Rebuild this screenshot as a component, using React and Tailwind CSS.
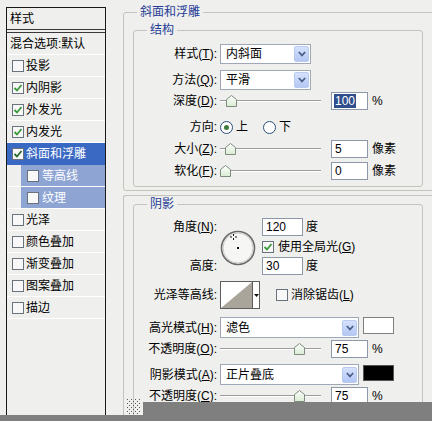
import React from "react";

const Check = ({ color = "#2f9a2f" }) => (
  <svg width="10" height="10" viewBox="0 0 10 10">
    <path d="M1.5 5 L4 7.5 L8.5 2" stroke={color} strokeWidth="1.8" fill="none" />
  </svg>
);

const Box = ({ checked, dark }) => (
  <span className="inline-flex w-[12px] h-[12px] shrink-0 items-center justify-center border border-[#69737d] bg-[#f8f8f8]">
    {checked && <Check color={dark ? "#2a6a2a" : "#3a9a3a"} />}
  </span>
);

const rows = [
  { t: "投影" },
  { t: "内阴影", c: true },
  { t: "外发光", c: true },
  { t: "内发光", c: true },
  { t: "斜面和浮雕", c: true, sel: true },
  { t: "等高线", sub: true },
  { t: "纹理", sub: true },
  { t: "光泽" },
  { t: "颜色叠加" },
  { t: "渐变叠加" },
  { t: "图案叠加" },
  { t: "描边" },
];

function LeftPanel() {
  return (
    <div className="ml-[6px] mt-[7px] w-[100px] h-[420px] shrink-0 border border-[#1a1a1a] flex flex-col">
      <div className="h-[25px] shrink-0 border-b-[4px] border-double border-[#3a3a3a] pl-[3px] flex items-center">样式</div>
      <div className="h-[22px] shrink-0 pl-[3px] flex items-center border-b border-white">混合选项:默认</div>
      {rows.map((r) =>
        r.sub ? (
          <div key={r.t} className="h-[22px] shrink-0 pl-[14px] border-b border-white">
            <div className="h-full bg-[#8ea5d4] flex items-center pl-[6px] gap-[3px] text-white">
              <Box />
              <span>{r.t}</span>
            </div>
          </div>
        ) : r.sel ? (
          <div key={r.t} className="h-[22px] shrink-0 bg-[#3a69c4] flex items-center pl-[5px] gap-[2px] text-white">
            <Box checked dark />
            <span>{r.t}</span>
          </div>
        ) : (
          <div key={r.t} className="h-[22px] shrink-0 border-b border-white flex items-center pl-[5px] gap-[2px]">
            <Box checked={r.c} />
            <span>{r.t}</span>
          </div>
        )
      )}
    </div>
  );
}

const Label = ({ children }) => (
  <div className="w-[83px] shrink-0 text-right whitespace-nowrap">{children}</div>
);

const K = ({ k }) => <span className="underline">{k}</span>;

const Arrow = () => (
  <div className="w-[15px] h-[16px] rounded-[2px] bg-linear-to-b from-[#d6e2fd] to-[#b3c7f4] border border-[#b9caef] flex items-center justify-center">
    <svg width="8" height="6" viewBox="0 0 8 6">
      <path d="M0.8 1 L4 4.4 L7.2 1" stroke="#4a5e86" strokeWidth="1.7" fill="none" />
    </svg>
  </div>
);

const Drop = ({ text, wide }) => (
  <div
    className={
      wide
        ? "ml-[3px] w-[139px] h-[21px] border border-[#9ea8b6] bg-white flex items-center justify-between pl-[5px] pr-[1px]"
        : "ml-[3px] w-[91px] h-[20px] border border-[#9ea8b6] bg-white flex items-center justify-between pl-[5px] pr-[1px]"
    }
  >
    <span>{text}</span>
    <Arrow />
  </div>
);

const Thumb = () => (
  <svg width="11" height="12" viewBox="0 0 11 12">
    <defs>
      <linearGradient id="tg" x1="0" y1="0" x2="0" y2="1">
        <stop offset="0" stopColor="#ffffff" />
        <stop offset="1" stopColor="#d8ecd2" />
      </linearGradient>
    </defs>
    <path d="M0.5 4.5 L5.5 0.5 L10.5 4.5 L10.5 11.5 L0.5 11.5 Z" fill="url(#tg)" stroke="#7d8c7d" />
  </svg>
);

const Slider = ({ pos }) => (
  <div className="relative ml-[3px] w-[103px] h-[18px] shrink-0 flex items-center">
    <div className="w-[101px] h-[2px] border-t border-[#9c9c9c] border-b border-b-white" />
    <div className="absolute top-[3px]" style={{ left: pos }}>
      <Thumb />
    </div>
  </div>
);

const Input = ({ v, sel, w41, ml }) => (
  <div
    className={
      (w41 ? "w-[41px] " : "w-[37px] ") +
      (ml ? "ml-[8px] " : "") +
      "h-[18px] shrink-0 border border-[#8d99a8] bg-white flex items-center pl-[2px]"
    }
  >
    {sel ? <span className="bg-[#2f4e8c] text-white px-[1px]">{v}</span> : <span className="pl-[1px]">{v}</span>}
  </div>
);

const Radio = ({ on }) => (
  <span className="inline-flex w-[13px] h-[13px] rounded-full border border-[#2b4e7a] bg-white items-center justify-center shrink-0">
    {on && <span className="w-[5px] h-[5px] rounded-full bg-[#3f7a3f]" />}
  </span>
);

const Legend = ({ children }) => (
  <legend className="ml-[13px] px-[3px] text-[#1e3c96] leading-[14px]">{children}</legend>
);

function AngleDial() {
  return (
    <svg width="36" height="36" viewBox="0 0 36 36" className="ml-[3px] mt-[12px] shrink-0">
      <circle cx="18" cy="18" r="16.5" fill="#f6f6f4" stroke="#6a6a6a" strokeWidth="1.6" />
      <circle cx="18" cy="18" r="15" fill="none" stroke="#c9c9c9" strokeWidth="1" />
      <rect x="17" y="17" width="2" height="2" fill="#111" />
      <path d="M13.5 4 V6 M13.5 8 V10 M10 7 H12 M15 7 H17" stroke="#111" strokeWidth="1" />
    </svg>
  );
}

function Contour() {
  return (
    <div className="ml-[3px] w-[40px] h-[28px] shrink-0 border border-[#5e5e5e] bg-white flex">
      <svg width="31" height="26" viewBox="0 0 31 26">
        <polygon points="0,26 31,0 31,26" fill="#aaa59b" />
      </svg>
      <div className="flex-1 border-l border-[#5e5e5e] flex items-center justify-center">
        <svg width="5" height="3" viewBox="0 0 5 3">
          <polygon points="0,0 5,0 2.5,3" fill="#111" />
        </svg>
      </div>
    </div>
  );
}

function Grip() {
  const dots = [];
  for (let y = 0; y < 15; y += 2)
    for (let x = 0; x < 14; x += 2)
      if (((x + y) / 2) % 2 === 0) dots.push(<rect key={x + "-" + y} x={x} y={y} width="1" height="1" fill="#555" />);
  return (
    <svg width="14" height="15" viewBox="0 0 14 15">
      {dots}
    </svg>
  );
}

function RightPanel() {
  return (
    <div className="ml-[17px] mt-[5px] flex flex-col shrink-0">
      <fieldset className="w-[330px] border border-[#c4c4bc] rounded-[3px] pl-[9px] pb-[3px]">
        <legend className="ml-[4px] px-[3px] text-[#1e3c96] leading-[14px]">斜面和浮雕</legend>
        <fieldset className="mt-[4px] w-[290px] border border-[#c4c4bc] rounded-[3px]">
          <Legend>结构</Legend>
          <div className="flex flex-col pt-[7px] pb-[6px]">
            <div className="h-[20px] flex items-center">
              <Label>样式(<K k="T" />):</Label>
              <Drop text="内斜面" />
            </div>
            <div className="mt-[6px] h-[20px] flex items-center">
              <Label>方法(<K k="Q" />):</Label>
              <Drop text="平滑" />
            </div>
            <div className="mt-[2px] h-[18px] flex items-center">
              <Label>深度(<K k="D" />):</Label>
              <Slider pos={6} />
              <Input v="100" sel ml />
              <span className="ml-[4px]">%</span>
            </div>
            <div className="mt-[8px] h-[18px] flex items-center">
              <Label>方向:</Label>
              <div className="ml-[3px] flex items-center gap-[3px]">
                <Radio on />
                <span>上</span>
              </div>
              <div className="ml-[15px] flex items-center gap-[3px]">
                <Radio />
                <span>下</span>
              </div>
            </div>
            <div className="mt-[4px] h-[18px] flex items-center">
              <Label>大小(<K k="Z" />):</Label>
              <Slider pos={5} />
              <Input v="5" ml />
              <span className="ml-[4px]">像素</span>
            </div>
            <div className="mt-[4px] h-[18px] flex items-center">
              <Label>软化(<K k="F" />):</Label>
              <Slider pos={0} />
              <Input v="0" ml />
              <span className="ml-[4px]">像素</span>
            </div>
          </div>
        </fieldset>
      </fieldset>

      <div className="mt-[4px] w-[330px] h-[260px] border-t border-l border-[#c4c4bc] rounded-tl-[3px] pl-[9px] pt-[1px]">
        <fieldset className="w-[290px] h-[250px] border border-[#c4c4bc] rounded-[3px]">
          <Legend>阴影</Legend>
          <div className="flex flex-col pt-[7px]">
            <div className="flex items-start">
              <div className="w-[83px] h-[57px] shrink-0 flex flex-col justify-between">
                <div className="h-[18px] flex items-center justify-end">角度(<K k="N" />):</div>
                <div className="h-[18px] flex items-center justify-end">高度:</div>
              </div>
              <AngleDial />
              <div className="ml-[6px] flex flex-col">
                <div className="h-[18px] flex items-center">
                  <Input v="120" w41 />
                  <span className="ml-[3px]">度</span>
                </div>
                <div className="mt-[4px] h-[14px] flex items-center">
                  <Box checked />
                  <span className="ml-[4px]">使用全局光(<K k="G" />)</span>
                </div>
                <div className="mt-[3px] h-[18px] flex items-center">
                  <Input v="30" w41 />
                  <span className="ml-[3px]">度</span>
                </div>
              </div>
            </div>
            <div className="mt-[6px] h-[28px] flex items-center">
              <Label>光泽等高线:</Label>
              <Contour />
              <div className="ml-[16px] flex items-center">
                <Box />
                <span className="ml-[3px]">消除锯齿(<K k="L" />)</span>
              </div>
            </div>
            <div className="mt-[8px] h-[21px] flex items-center">
              <Label>高光模式(<K k="H" />):</Label>
              <Drop text="滤色" wide />
              <div className="ml-[4px] self-start mt-0 w-[31px] h-[17px] border border-[#7f7f7f] bg-white" />
            </div>
            <div className="mt-[2px] h-[18px] flex items-center">
              <Label>不透明度(<K k="O" />):</Label>
              <Slider pos={74} />
              <Input v="75" ml />
              <span className="ml-[4px]">%</span>
            </div>
            <div className="mt-[6px] h-[21px] flex items-center">
              <Label>阴影模式(<K k="A" />):</Label>
              <Drop text="正片叠底" wide />
              <div className="ml-[4px] self-start mt-[1px] w-[31px] h-[16px] border border-[#555] bg-black" />
            </div>
            <div className="mt-[2px] h-[18px] flex items-center">
              <Label>不透明度(<K k="C" />):</Label>
              <Slider pos={74} />
              <Input v="75" ml />
              <span className="ml-[4px]">%</span>
            </div>
          </div>
        </fieldset>
      </div>
    </div>
  );
}

export default function App() {
  return (
    <div className="relative w-[432px] h-[421px] overflow-hidden bg-[#efefed] flex items-start font-['Liberation_Sans','Noto_Sans_CJK_SC',sans-serif] text-[12px] leading-[14px] text-black">
      <LeftPanel />
      <RightPanel />
      <div className="absolute left-[127px] top-[399px]">
        <Grip />
      </div>
      <div className="absolute left-[143px] top-[402px] right-0 bottom-0 bg-[#7f7f7f]" />
      <div className="absolute left-0 top-[415px] right-0 bottom-0 bg-[#7f7f7f]" />
    </div>
  );
}
